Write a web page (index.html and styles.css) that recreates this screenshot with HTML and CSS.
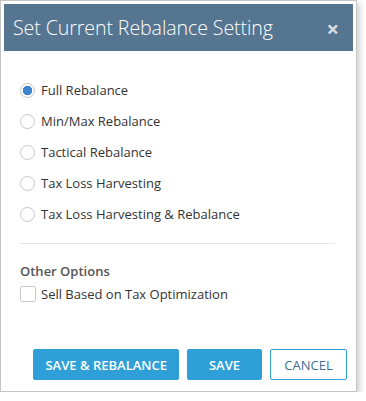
FILE: index.html
```html
<!DOCTYPE html>
<html lang="en">
<head>
  <meta charset="UTF-8">
  <title>Set Current Rebalance Setting</title>
  <link rel="stylesheet" href="styles.css">
</head>
<body>
  <div class="dialog">
    <header class="dialog-header">
      <h1>Set Current Rebalance Setting</h1>
      <span class="close">&times;</span>
    </header>

    <div class="dialog-body">
      <!-- rebalance type -->
      <div class="options">
        <label class="option"><input type="radio" name="mode" checked><span>Full Rebalance</span></label>
        <label class="option"><input type="radio" name="mode"><span>Min/Max Rebalance</span></label>
        <label class="option"><input type="radio" name="mode"><span>Tactical Rebalance</span></label>
        <label class="option"><input type="radio" name="mode"><span>Tax Loss Harvesting</span></label>
        <label class="option"><input type="radio" name="mode"><span>Tax Loss Harvesting &amp; Rebalance</span></label>
      </div>

      <hr class="divider">

      <p class="section-title">Other Options</p>
      <label class="option check"><input type="checkbox"><span>Sell Based on Tax Optimization</span></label>
    </div>

    <div class="dialog-footer">
      <button class="btn primary">SAVE &amp; REBALANCE</button>
      <button class="btn primary save">SAVE</button>
      <button class="btn outline">CANCEL</button>
    </div>
  </div>
</body>
</html>
```

FILE: styles.css
```css
* {
  box-sizing: border-box;
  margin: 0;
  padding: 0;
}
body {
  font-family: "Open Sans", "Noto Sans", sans-serif;
  background: #fff;
  color: #333;
}
.dialog {
  width: 357px;
  height: 392px;
  border: 1px solid #c4c4c4;
  padding: 3px;
  background: #fff;
  box-shadow: 3px 3px 6px rgba(0,0,0,0.18);
  display: flex;
  flex-direction: column;
}
.dialog-header {
  background: #557591;
  height: 47px;
  display: flex;
  align-items: center;
  justify-content: space-between;
  padding: 0 14px 0 9px;
}
.dialog-header h1 {
  font-weight: 300;
  font-size: 19.6px;
  color: #fff;
  letter-spacing: -0.1px;
}
.close {
  color: #d9dee3;
  font-size: 22px;
  font-weight: 700;
  line-height: 1;
}
.dialog-body {
  padding: 29px 15px 0 16px;
  flex: 1;
}
.options {
  display: flex;
  flex-direction: column;
  gap: 11px;
}
.option {
  display: flex;
  align-items: center;
  font-size: 13px;
  height: 20px;
  color: #333;
}
.option input {
  appearance: none;
  width: 15px;
  height: 15px;
  border: 1px solid #c8c8c8;
  border-radius: 50%;
  margin: 0 6px 0 0;
  background: #fff;
}
.option input[type="radio"]:checked {
  border-color: #c8c8c8;
  background: radial-gradient(circle, #3a84d0 0 4.5px, #fff 5px);
}
.option input[type="checkbox"] {
  border-radius: 2px;
  width: 16px;
  height: 16px;
  margin-right: 5px;
}
.option.check {
  margin-top: 4px;
}
.divider {
  border: none;
  border-top: 1px solid #e6e6e6;
  margin: 19px 3px 0 0;
}
.section-title {
  font-size: 13px;
  font-weight: 600;
  color: #555;
  margin-top: 18px;
  line-height: 18px;
}
.dialog-footer {
  display: flex;
  justify-content: flex-end;
  gap: 8px;
  padding: 0 6px 8px 0;
}
.btn {
  height: 31px;
  font-family: inherit;
  font-size: 13px;
  font-weight: 600;
  border-radius: 2px;
  padding: 0 11px;
}
.primary {
  background: #2e9fd7;
  border: 1px solid #2e9fd7;
  color: #fff;
}
.save {
  width: 75px;
}
.outline {
  background: #fff;
  border: 1px solid #2e9fd7;
  color: #3b6f94;
  font-weight: 400;
  width: 77px;
}
```
